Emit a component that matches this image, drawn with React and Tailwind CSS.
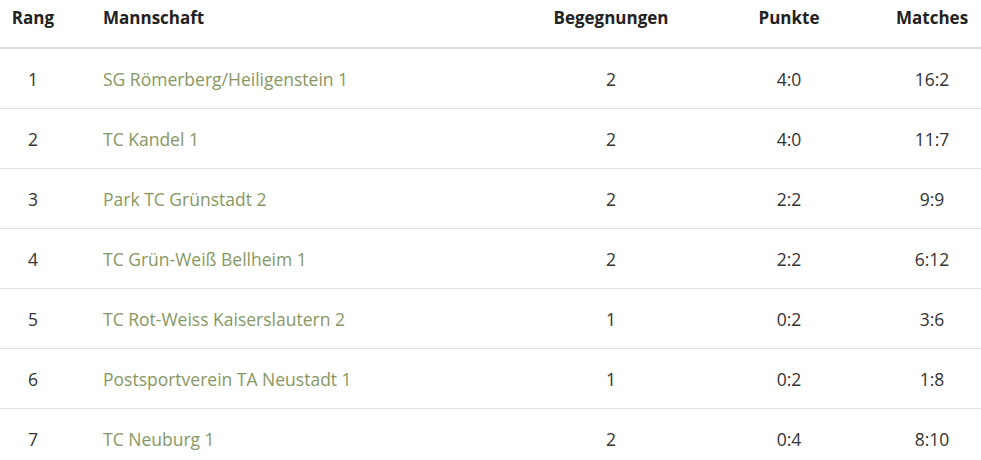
import React from 'react';

// Tabelle
const rows = [
  { rang: 1, team: 'SG Römerberg/Heiligenstein 1', beg: 2, punkte: '4:0', matches: '16:2' },
  { rang: 2, team: 'TC Kandel 1', beg: 2, punkte: '4:0', matches: '11:7' },
  { rang: 3, team: 'Park TC Grünstadt 2', beg: 2, punkte: '2:2', matches: '9:9' },
  { rang: 4, team: 'TC Grün-Weiß Bellheim 1', beg: 2, punkte: '2:2', matches: '6:12' },
  { rang: 5, team: 'TC Rot-Weiss Kaiserslautern 2', beg: 1, punkte: '0:2', matches: '3:6' },
  { rang: 6, team: 'Postsportverein TA Neustadt 1', beg: 1, punkte: '0:2', matches: '1:8' },
  { rang: 7, team: 'TC Neuburg 1', beg: 2, punkte: '0:4', matches: '8:10' },
];

const cols = 'grid grid-cols-[66px_474px_142px_214px_72px_1fr]';

const App = () => {
  return (
    <div className="w-[981px] h-[460px] overflow-hidden bg-white font-['Open_Sans',sans-serif] leading-6">
      {/* Header */}
      <div className={`${cols} items-start h-[49px] pt-[6px] border-b-2 border-[#dcdcdc] font-bold text-[17px] text-[#222]`}>
        <div className="text-center">Rang</div>
        <div className="pl-[37px]">Mannschaft</div>
        <div className="text-center">Begegnungen</div>
        <div className="text-center">Punkte</div>
        <div className="text-center">Matches</div>
        <div />
      </div>

      {/* Rows */}
      {rows.map((r) => (
        <div key={r.rang} className={`${cols} items-center h-[60px] border-b border-[#e2e2e2] text-[17.5px] text-[#333]`}>
          <div className="text-center">{r.rang}</div>
          <div className="pl-[37px] text-[#879763]">{r.team}</div>
          <div className="text-center">{r.beg}</div>
          <div className="text-center">{r.punkte}</div>
          <div className="text-center">{r.matches}</div>
          <div />
        </div>
      ))}
    </div>
  );
};

export default App;
